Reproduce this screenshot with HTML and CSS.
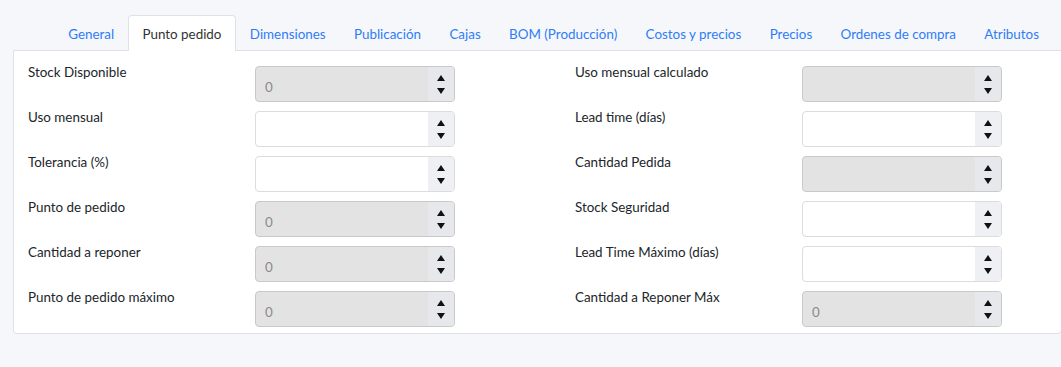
FILE: index.html
```html
<!DOCTYPE html>
<html lang="es">
<head>
    <meta charset="UTF-8">
    <meta name="viewport" content="width=device-width, initial-scale=1.0">
    <title>Punto pedido</title>
    <link rel="stylesheet" href="styles.css">
</head>
<body>
    <!-- Pestañas -->
    <ul class="tabs">
        <li class="tab">General</li>
        <li class="tab active">Punto pedido</li>
        <li class="tab">Dimensiones</li>
        <li class="tab">Publicación</li>
        <li class="tab">Cajas</li>
        <li class="tab">BOM (Producción)</li>
        <li class="tab">Costos y precios</li>
        <li class="tab">Precios</li>
        <li class="tab">Ordenes de compra</li>
        <li class="tab">Atributos</li>
    </ul>

    <!-- Contenido de la pestaña -->
    <div class="panel">
        <div class="field">
            <label>Stock Disponible</label>
            <div class="num disabled"><span class="val">0</span><span class="spin"><i class="up"></i><i class="down"></i></span></div>
        </div>
        <div class="field">
            <label>Uso mensual calculado</label>
            <div class="num disabled"><span class="val"></span><span class="spin"><i class="up"></i><i class="down"></i></span></div>
        </div>

        <div class="field">
            <label>Uso mensual</label>
            <div class="num"><span class="val"></span><span class="spin"><i class="up"></i><i class="down"></i></span></div>
        </div>
        <div class="field">
            <label>Lead time (días)</label>
            <div class="num"><span class="val"></span><span class="spin"><i class="up"></i><i class="down"></i></span></div>
        </div>

        <div class="field">
            <label>Tolerancia (%)</label>
            <div class="num"><span class="val"></span><span class="spin"><i class="up"></i><i class="down"></i></span></div>
        </div>
        <div class="field">
            <label>Cantidad Pedida</label>
            <div class="num disabled"><span class="val"></span><span class="spin"><i class="up"></i><i class="down"></i></span></div>
        </div>

        <div class="field">
            <label>Punto de pedido</label>
            <div class="num disabled"><span class="val">0</span><span class="spin"><i class="up"></i><i class="down"></i></span></div>
        </div>
        <div class="field">
            <label>Stock Seguridad</label>
            <div class="num"><span class="val"></span><span class="spin"><i class="up"></i><i class="down"></i></span></div>
        </div>

        <div class="field">
            <label>Cantidad a reponer</label>
            <div class="num disabled"><span class="val">0</span><span class="spin"><i class="up"></i><i class="down"></i></span></div>
        </div>
        <div class="field">
            <label>Lead Time Máximo (días)</label>
            <div class="num"><span class="val"></span><span class="spin"><i class="up"></i><i class="down"></i></span></div>
        </div>

        <div class="field">
            <label>Punto de pedido máximo</label>
            <div class="num disabled"><span class="val">0</span><span class="spin"><i class="up"></i><i class="down"></i></span></div>
        </div>
        <div class="field">
            <label>Cantidad a Reponer Máx</label>
            <div class="num disabled"><span class="val">0</span><span class="spin"><i class="up"></i><i class="down"></i></span></div>
        </div>
    </div>
</body>
</html>
```

FILE: styles.css
```css
body {
    margin: 0;
    padding: 15px 0 0 13px;
    background: #f6f7fb;
    font-family: 'Lato', 'Liberation Sans', sans-serif;
    font-size: 13.4px;
    color: #212529;
    overflow: hidden;
}

.tabs {
    list-style: none;
    margin: 0 0 0 41px;
    padding: 0;
    display: flex;
    position: relative;
    z-index: 2;
}

.tab {
    padding: 0 13.2px;
    height: 34px;
    line-height: 36px;
    border: 1px solid transparent;
    border-bottom: none;
    color: #2f7df6;
    white-space: nowrap;
}

.tab.active {
    background: #fff;
    color: #333;
    border-color: #dee2e6;
    border-radius: 4px 4px 0 0;
    height: 35px;
    margin-bottom: -1px;
}

.panel {
    width: 1049px;
    box-sizing: border-box;
    background: #fff;
    border: 1px solid #dee2e6;
    border-radius: 0 0 4px 4px;
    padding: 11px 14px 6px;
    display: grid;
    grid-template-columns: 547px 547px;
    row-gap: 5px;
}

.field {
    display: flex;
    align-items: flex-start;
}

.field label {
    width: 227px;
    line-height: 21px;
}

.num {
    margin-top: 4px;
    width: 200px;
    height: 36px;
    box-sizing: border-box;
    border: 1px solid #dcdcdc;
    border-radius: 4px;
    background: #fff;
    display: flex;
    overflow: hidden;
}

.num.disabled {
    background: #e3e3e3;
    border-color: #c9c9c9;
}

.val {
    flex: 1;
    padding: 6px 9px 0;
    line-height: 28px;
    color: #8a8a8a;
}

.spin {
    width: 26px;
    background: #eef0f3;
    display: flex;
    flex-direction: column;
    align-items: center;
    justify-content: center;
    gap: 7px;
}

.num.disabled .spin {
    background: #e6e8eb;
}

.spin i {
    width: 0;
    height: 0;
    border-left: 4px solid transparent;
    border-right: 4px solid transparent;
}

.spin .up {
    border-bottom: 6px solid #111;
}

.spin .down {
    border-top: 6px solid #111;
}
```
